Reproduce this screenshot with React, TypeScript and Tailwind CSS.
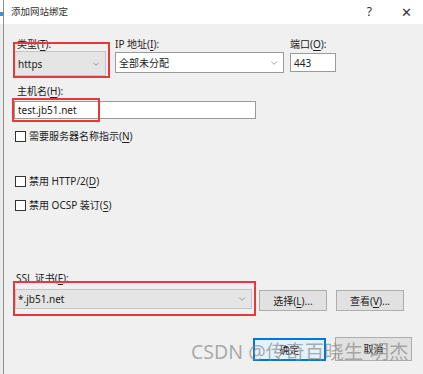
import React from 'react';
import { ChevronDown } from 'lucide-react';

const font = { fontFamily: '"Noto Sans", "Noto Sans CJK SC", sans-serif' };

const Key: React.FC<{ k: string }> = ({ k }) => <span className="underline underline-offset-2">{k}</span>;

const Chevron = () => <ChevronDown className="w-[10px] h-[10px] text-[#555]" strokeWidth={1.3} />;

const Check: React.FC<{ children: React.ReactNode }> = ({ children }) => (
  <div className="flex items-center h-[16px] pl-[1px] gap-[3px]">
    <div className="w-[11px] h-[11px] border border-[#333] bg-white" />
    <span>{children}</span>
  </div>
);

export default function App() {
  return (
    <div
      className="relative w-[423px] h-[374px] flex bg-[#f0f0f0] overflow-hidden text-[10px] leading-[14px] text-[#222]"
      style={font}
    >
      {/* window behind the dialog */}
      <div className="w-[4px] border-r border-[#8f8f8f] bg-[#ececec] flex flex-col">
        <div className="h-[24px] bg-white" />
        <div className="mt-[-12px] h-[4px] w-[3px] bg-[#3d8fd6]" />
      </div>

      <div className="flex-1 flex flex-col">
        {/* Title bar */}
        <div className="h-[24px] bg-white flex items-center pl-[7px] text-[9.5px] text-[#333]">
          <span>添加网站绑定</span>
          <span className="ml-auto mr-[29px] text-[12px]">?</span>
          <span className="mr-[11px] text-[13px] font-light">✕</span>
        </div>

        {/* Body */}
        <div className="flex flex-col pl-[10px]">
          <div className="flex items-start mt-[13px]">
            <div className="w-[92px] flex flex-col">
              <span className="pl-[3px]">类型(<Key k="T" />):</span>
              <div className="h-[25px] bg-[#e5e5e5] border border-[#c4c4c4] flex items-center pl-[3px] pr-[4px]">
                <span className="flex-1">https</span>
                <Chevron />
              </div>
            </div>
            <div className="w-[169px] ml-[9px] flex flex-col">
              <span>IP 地址(<Key k="I" />):</span>
              <div className="h-[21px] bg-white border border-[#9a9a9a] flex items-center pl-[3px] pr-[4px] mt-[1px]">
                <span className="flex-1">全部未分配</span>
                <Chevron />
              </div>
            </div>
            <div className="w-[46px] ml-[6px] flex flex-col">
              <span>端口(<Key k="O" />):</span>
              <div className="h-[19px] bg-white border border-[#9a9a9a] flex items-center pl-[3px] mt-[2px]">443</div>
            </div>
          </div>

          <span className="mt-[8px] pl-[3px]">主机名(<Key k="H" />):</span>
          <div className="w-[242px] h-[18px] mt-[3px] bg-white border border-[#9a9a9a] flex items-center pl-[3px]">
            test.jb51.net
          </div>

          <div className="mt-[9px]">
            <Check>需要服务器名称指示(<Key k="N" />)</Check>
          </div>
          <div className="mt-[29px]">
            <Check>禁用 HTTP/2(<Key k="D" />)</Check>
          </div>
          <div className="mt-[8px]">
            <Check>禁用 OCSP 装订(<Key k="S" />)</Check>
          </div>

          <span className="mt-[58px] pl-[2px]">SSL 证书(<Key k="F" />):</span>
          <div className="flex items-start mt-[4px]">
            <div className="w-[237px] ml-[1px] h-[20px] bg-[#e5e5e5] border border-[#c4c4c4] flex items-center pl-[2px] pr-[4px]">
              <span className="flex-1">*.jb51.net</span>
              <Chevron />
            </div>
            <button className="ml-[7px] mt-[1px] w-[68px] h-[21px] bg-[#e1e1e1] border border-[#adadad] flex items-center justify-center">
              选择(<Key k="L" />)...
            </button>
            <button className="ml-[9px] mt-[1px] w-[68px] h-[21px] bg-[#e1e1e1] border border-[#adadad] flex items-center justify-center">
              查看(<Key k="V" />)...
            </button>
          </div>

          <div className="flex justify-end items-start mt-[27px] pr-[11px]">
            <button className="w-[73px] h-[23px] bg-[#e5f1fb] border-2 border-[#0078d7] flex items-center justify-center">
              确定
            </button>
            <button className="ml-[9px] mt-[-1px] w-[77px] h-[24px] bg-[#e1e1e1] border border-[#adadad] flex items-center justify-center">
              取消
            </button>
          </div>
        </div>
      </div>

      {/* annotation boxes */}
      <div className="absolute left-[13px] top-[42px] w-[97px] h-[36px] border-2 border-[#e53a3a]" />
      <div className="absolute left-[12px] top-[98px] w-[88px] h-[24px] border-2 border-[#e53a3a]" />
      <div className="absolute left-[13px] top-[281px] w-[243px] h-[35px] border-2 border-[#e53a3a]" />

      {/* watermark */}
      <div className="absolute left-[191px] top-[341px] text-[19.5px] leading-[22px] text-[#8a8a8a]/70 whitespace-nowrap">
        CSDN @传奇百晓生-明杰
      </div>
    </div>
  );
}
